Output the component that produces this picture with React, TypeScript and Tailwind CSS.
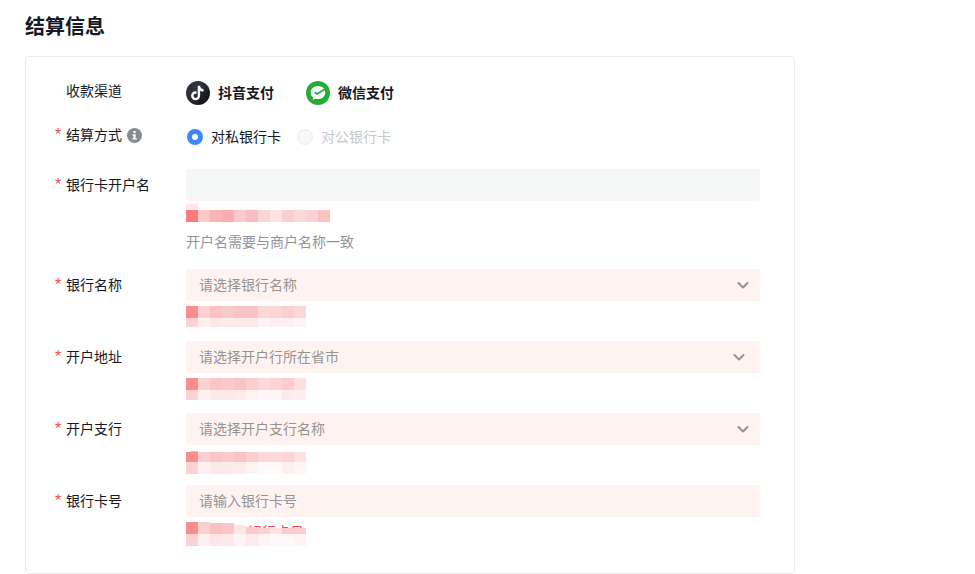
import type { ReactNode } from "react";

type Block = [x: number, y: number, w: number, h: number, fill: string];

function row(y: number, h: number, fills: string[]): Block[] {
  return fills.map((fill, i) => [i * 12, y, 12, h, fill]);
}

const nameBlocks: Block[] = [
  [0, 3, 12, 6, "#fde6e5"],
  [12, 6, 3, 3, "#fef0ef"],
  [48, 8, 24, 1, "#fef3f2"],
  [108, 8, 12, 1, "#fef5f4"],
  [132, 7, 90, 1, "#fefcfc"],
  ...row(9, 12, ["#f97c7c", "#fbcaca", "#fab4b6", "#faadb0", "#fbcacc", "#fabec0", "#fcd6d6", "#fde4e3", "#fbced0", "#fcd8d8", "#fcd3d8", "#fbc2c2"]),
];

const bankBlocks: Block[] = [
  [0, 4, 132, 1, "#fffaf8"],
  ...row(5, 12, ["#f98e8e", "#fbd2d4", "#fbc4c4", "#fbcaca", "#fbc4c4", "#fbc4c4", "#fcd6d8", "#fcd4d6", "#fbcfd0", "#fcd6d8"]),
  ...row(17, 9, ["#fcd2d4", "#fef0f0", "#fde8e9", "#fdeaeb", "#fde8ea", "#fde9ea", "#fef3f5", "#fef0f2", "#fef0f2", "#fef4f6"]),
];

const addressBlocks: Block[] = [
  [0, 4, 160, 1, "#fffaf8"],
  ...row(5, 12, ["#f98e8e", "#fbd2d4", "#fbc6c6", "#fbcaca", "#fbc4c4", "#fbced0", "#fcd8dc", "#fcd4d4", "#fbcdd0", "#fde0e2"]),
  ...row(17, 10, ["#fcd2d4", "#fef0f0", "#fde8e8", "#fde8e8", "#fdeaeb", "#fef2f2", "#fff7f7", "#fff7f6", "#fdeaec", "#fef0f2"]),
];

const branchBlocks: Block[] = [
  [5, 6, 7, 1, "#fbb4b4"],
  ...row(7, 10, ["#f98e8e", "#fbd0d2", "#fbc6c6", "#fbcaca", "#fbc4c4", "#fbced0", "#fcd8dc", "#fcdadc", "#fcd4d4", "#fde2e4"]),
  ...row(17, 12, ["#fcd2d4", "#fef0f0", "#fde8e8", "#fde9ea", "#fdeaeb", "#fef3f3", "#fffaf9", "#fffaf7", "#fef0f1", "#fff6f6"]),
];

const cardBlocks: Block[] = [
  [0, 5, 12, 12, "#f98e8e"],
  [12, 5, 12, 12, "#fbd0d2"],
  [24, 6, 12, 11, "#fbc0c0"],
  [36, 6, 12, 11, "#fbc6c8"],
  [48, 8, 12, 9, "#fde6e8"],
  [60, 10, 12, 7, "#fbcaca"],
  [72, 11, 12, 6, "#fbd2d4"],
  [84, 11, 12, 6, "#fde2e2"],
  [96, 11, 12, 6, "#fbcccf"],
  [108, 11, 12, 6, "#fbced0"],
  ...row(17, 12, ["#fcd2d4", "#fef0f0", "#fde6e8", "#fde8ea", "#fef3f5", "#fdeaee", "#fef3f5", "#fff8fa", "#fff8fa", "#fff3f3"]),
];

function Mosaic({ blocks }: { blocks: Block[] }) {
  return (
    <svg className="relative block" width="240" height="30" shapeRendering="crispEdges" aria-hidden="true">
      {blocks.map(([x, y, w, h, fill], i) => (
        <rect key={i} x={x} y={y} width={w} height={h} fill={fill} />
      ))}
    </svg>
  );
}

function Row({ label, htmlFor, required = true, extra, height, children }: {
  label: string;
  htmlFor?: string;
  required?: boolean;
  extra?: ReactNode;
  height: string;
  children: ReactNode;
}) {
  return (
    <div className={`grid grid-cols-[131px_1fr] items-start ${height}`}>
      <div className="flex h-8 items-center">
        <span className="w-[11px] shrink-0 font-['Liberation_Sans',sans-serif] text-base leading-8 text-[#f5483b]" aria-hidden="true">
          {required ? "*" : ""}
        </span>
        {htmlFor ? <label htmlFor={htmlFor} className="pb-0.5">{label}</label> : <span className="pb-0.5">{label}</span>}
        {extra}
      </div>
      <div>{children}</div>
    </div>
  );
}

function SelectBox({ id, placeholder, chevron }: { id: string; placeholder: string; chevron: string }) {
  return (
    <div className="relative">
      <select id={id} className="block h-8 w-full appearance-none rounded-xs bg-[#fff3f1] px-[13px] pb-0.5 text-sm text-[#999390] outline-none">
        <option>{placeholder}</option>
      </select>
      <svg className={`pointer-events-none absolute top-[10px] ${chevron}`} width="12" height="12" viewBox="0 0 12 12" fill="none" stroke="#98928f" strokeWidth="2" strokeLinecap="round" strokeLinejoin="round" aria-hidden="true">
        <path d="M1.5 4 6 8.5 10.500 4" />
      </svg>
    </div>
  );
}

function DouyinLogo() {
  return (
    <svg width="24" height="24" viewBox="0 0 24 24" aria-hidden="true">
      <defs>
        <linearGradient id="disc" x1="0" y1="0" x2="1" y2="1">
          <stop offset="0.4" stopColor="#30323b" />
          <stop offset="1" stopColor="#08090c" />
        </linearGradient>
      </defs>
      <circle cx="12" cy="12" r="12" fill="url(#disc)" />
      <path d="M12.900 4.800v10a3.300 3.300 0 1 1-3.300-3.300h.9M12.900 5c.3 2.700 2 4.200 4.600 4.400" fill="none" stroke="#fff" strokeWidth="2.400" />
    </svg>
  );
}

function WechatPayLogo() {
  return (
    <svg width="24" height="24" viewBox="0 0 24 24" aria-hidden="true">
      <circle cx="12" cy="12" r="12" fill="#23ac38" />
      <path d="M12 5c-4.100 0-7.300 2.900-7.300 6.500 0 2.100 1 3.900 2.600 5.100l-.5 2.400 2.600-1.300c.8.3 1.700.4 2.600.4 4.100 0 7.300-2.900 7.300-6.600S16.100 5 12 5Z" fill="#fff" />
      <path d="m8.700 11.200 2.300 1.700L19.500 7.800" fill="none" stroke="#23ac38" strokeWidth="1.700" />
    </svg>
  );
}

function InfoIcon() {
  return (
    <svg className="ml-[5px]" width="15" height="15" viewBox="0 0 15 15" aria-hidden="true">
      <circle cx="7.500" cy="7.500" r="7.500" fill="#868b90" />
      <path d="M6.400 3h2.200v2H6.400zM5.400 6.200h3.200v4h1.200v1.300H5.200v-1.300h1.200V7.500h-1z" fill="#fff" />
    </svg>
  );
}

export default function App() {
  return (
    <main className="bg-white px-[25px] pt-3 font-['Noto_Sans_CJK_SC',sans-serif] text-sm text-[#161823]">
      <h1 className="mb-4 text-xl leading-7 font-bold">结算信息</h1>
      <form className="max-w-[770px] rounded-sm border border-[#ebebec] pt-[18px] pr-[34px] pb-4 pl-[29px]">
        <Row label="收款渠道" required={false} height="min-h-11">
          <div className="flex h-9 items-center gap-8 font-bold">
            <div className="flex items-center gap-2">
              <DouyinLogo />
              <span className="pb-0.5">抖音支付</span>
            </div>
            <div className="flex items-center gap-2">
              <WechatPayLogo />
              <span className="pb-0.5">微信支付</span>
            </div>
          </div>
        </Row>
        <Row label="结算方式" extra={<InfoIcon />} height="min-h-[50px]">
          <div className="flex h-9 items-center gap-4 pl-px">
            <label className="flex items-center gap-2">
              <input type="radio" name="method" defaultChecked className="size-4 appearance-none rounded-full border-[5px] border-[#3d88ff] bg-white" />
              <span className="pb-0.5">对私银行卡</span>
            </label>
            <label className="flex items-center gap-2 text-[#c8c8cb]">
              <input type="radio" name="method" disabled className="size-4 appearance-none rounded-full border border-[#ebeced] bg-[#f6f8f8]" />
              <span className="pb-0.5">对公银行卡</span>
            </label>
          </div>
        </Row>
        <Row label="银行卡开户名" htmlFor="holder" height="min-h-[100px]">
          <input id="holder" type="text" readOnly className="block h-8 w-full rounded-xs border border-[#fbf4f2] bg-[#f5f7f7] px-3 outline-none" />
          <Mosaic blocks={nameBlocks} />
          <p className="leading-5 text-[#939498]">开户名需要与商户名称一致</p>
        </Row>
        <Row label="银行名称" htmlFor="bank" height="min-h-[72px]">
          <SelectBox id="bank" placeholder="请选择银行名称" chevron="right-[11px]" />
          <Mosaic blocks={bankBlocks} />
        </Row>
        <Row label="开户地址" htmlFor="address" height="min-h-[72px]">
          <SelectBox id="address" placeholder="请选择开户行所在省市" chevron="right-[15px]" />
          <Mosaic blocks={addressBlocks} />
        </Row>
        <Row label="开户支行" htmlFor="branch" height="min-h-[72px]">
          <SelectBox id="branch" placeholder="请选择开户支行名称" chevron="right-[11px]" />
          <Mosaic blocks={branchBlocks} />
        </Row>
        <Row label="银行卡号" htmlFor="card" height="min-h-[72px]">
          <input id="card" type="text" placeholder="请输入银行卡号" className="block h-8 w-full rounded-xs bg-[#fff3f1] px-[13px] pb-0.5 text-sm outline-none placeholder:text-[#999390]" />
          <div className="relative">
            <span className="absolute top-1 left-[62px] leading-5 text-[#f5485b]">银行卡号</span>
            <Mosaic blocks={cardBlocks} />
          </div>
        </Row>
      </form>
    </main>
  );
}
